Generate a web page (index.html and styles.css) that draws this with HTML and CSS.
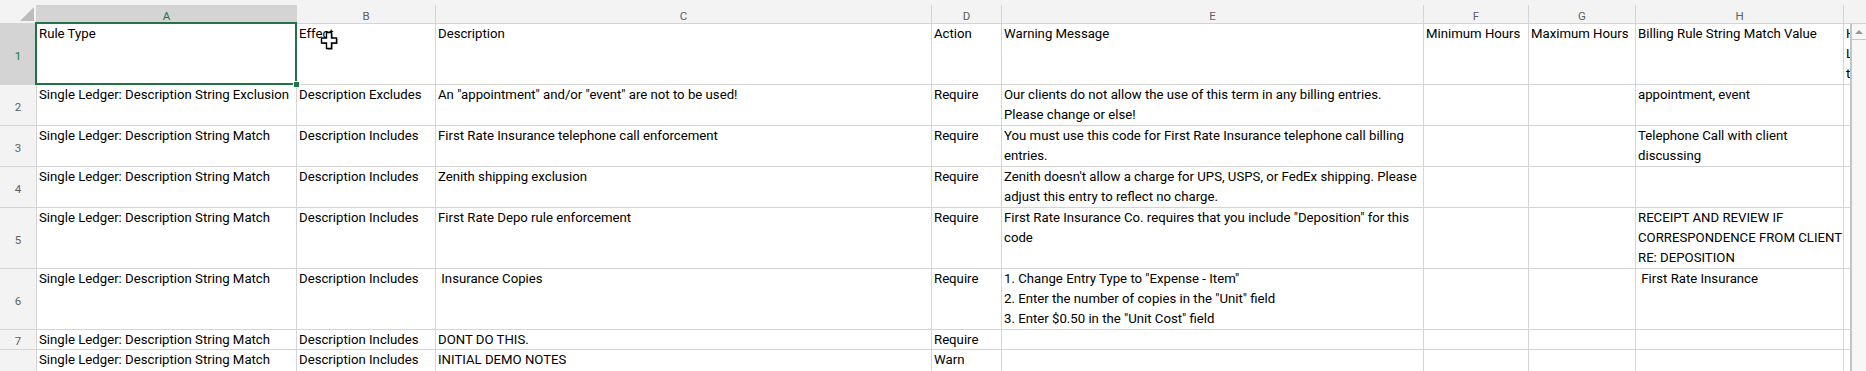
FILE: index.html
```
<!DOCTYPE html>
<html lang="en">
<head>
    <meta charset="UTF-8">
    <meta name="viewport" content="width=device-width, initial-scale=1.0">
    <title>Billing Rules - Sheet1</title>
    <link rel="stylesheet" href="styles.css">
</head>
<body>
    <div class="sheet">
        <div class="grid">
            <!-- column headers -->
            <div class="corner"><span class="corner-tri"></span></div>
            <div class="col-head selected">A</div>
            <div class="col-head">B</div>
            <div class="col-head">C</div>
            <div class="col-head">D</div>
            <div class="col-head">E</div>
            <div class="col-head">F</div>
            <div class="col-head">G</div>
            <div class="col-head">H</div>
            <div class="col-head">I</div>

            <!-- row 1 -->
            <div class="row-head selected">1</div>
            <div class="cell active">Rule Type</div>
            <div class="cell">Effect</div>
            <div class="cell">Description</div>
            <div class="cell">Action</div>
            <div class="cell">Warning Message</div>
            <div class="cell">Minimum Hours</div>
            <div class="cell">Maximum Hours</div>
            <div class="cell">Billing Rule String Match Value</div>
            <div class="cell">Hours<br>Limit<br>type</div>

            <!-- row 2 -->
            <div class="row-head">2</div>
            <div class="cell">Single Ledger: Description String Exclusion</div>
            <div class="cell">Description Excludes</div>
            <div class="cell">An "appointment" and/or "event" are not to be used!</div>
            <div class="cell">Require</div>
            <div class="cell">Our clients do not allow the use of this term in any billing entries.<br>Please change or else!</div>
            <div class="cell"></div>
            <div class="cell"></div>
            <div class="cell">appointment, event</div>
            <div class="cell"></div>

            <!-- row 3 -->
            <div class="row-head">3</div>
            <div class="cell">Single Ledger: Description String Match</div>
            <div class="cell">Description Includes</div>
            <div class="cell">First Rate Insurance telephone call enforcement</div>
            <div class="cell">Require</div>
            <div class="cell">You must use this code for First Rate Insurance telephone call billing<br>entries.</div>
            <div class="cell"></div>
            <div class="cell"></div>
            <div class="cell">Telephone Call with client<br>discussing</div>
            <div class="cell"></div>

            <!-- row 4 -->
            <div class="row-head">4</div>
            <div class="cell">Single Ledger: Description String Match</div>
            <div class="cell">Description Includes</div>
            <div class="cell">Zenith shipping exclusion</div>
            <div class="cell">Require</div>
            <div class="cell">Zenith doesn't allow a charge for UPS, USPS, or FedEx shipping. Please<br>adjust this entry to reflect no charge.</div>
            <div class="cell"></div>
            <div class="cell"></div>
            <div class="cell"></div>
            <div class="cell"></div>

            <!-- row 5 -->
            <div class="row-head">5</div>
            <div class="cell">Single Ledger: Description String Match</div>
            <div class="cell">Description Includes</div>
            <div class="cell">First Rate Depo rule enforcement</div>
            <div class="cell">Require</div>
            <div class="cell">First Rate Insurance Co. requires that you include "Deposition" for this<br>code</div>
            <div class="cell"></div>
            <div class="cell"></div>
            <div class="cell">RECEIPT AND REVIEW IF<br>CORRESPONDENCE FROM CLIENT<br>RE: DEPOSITION</div>
            <div class="cell"></div>

            <!-- row 6 -->
            <div class="row-head">6</div>
            <div class="cell">Single Ledger: Description String Match</div>
            <div class="cell">Description Includes</div>
            <div class="cell">&nbsp;Insurance Copies</div>
            <div class="cell">Require</div>
            <div class="cell">1. Change Entry Type to "Expense - Item"<br>2. Enter the number of copies in the "Unit" field<br>3. Enter $0.50 in the "Unit Cost" field</div>
            <div class="cell"></div>
            <div class="cell"></div>
            <div class="cell">&nbsp;First Rate Insurance</div>
            <div class="cell"></div>

            <!-- row 7 -->
            <div class="row-head">7</div>
            <div class="cell">Single Ledger: Description String Match</div>
            <div class="cell">Description Includes</div>
            <div class="cell">DONT DO THIS.</div>
            <div class="cell">Require</div>
            <div class="cell"></div>
            <div class="cell"></div>
            <div class="cell"></div>
            <div class="cell"></div>
            <div class="cell"></div>

            <!-- row 8 -->
            <div class="row-head">8</div>
            <div class="cell">Single Ledger: Description String Match</div>
            <div class="cell">Description Includes</div>
            <div class="cell">INITIAL DEMO NOTES</div>
            <div class="cell">Warn</div>
            <div class="cell"></div>
            <div class="cell"></div>
            <div class="cell"></div>
            <div class="cell"></div>
            <div class="cell"></div>
        </div>

        <div class="vscroll">
            <div class="vscroll-up"><span class="arrow-up"></span></div>
        </div>

        <!-- mouse pointer over B1 -->
        <svg class="pointer" width="18" height="19" viewBox="0 0 18 19">
            <path d="M6.5 1.5h5v5.5h5v5h-5v5.5h-5v-5.5h-5v-5h5z" fill="#555" transform="translate(1 1)"/>
            <path d="M6.5 1.5h5v5.5h5v5h-5v5.5h-5v-5.5h-5v-5h5z" fill="#fff" stroke="#000" stroke-width="1.4"/>
        </svg>
    </div>
</body>
</html>
```

FILE: styles.css
```
html, body {
    margin: 0;
    padding: 0;
    height: 100%;
    overflow: hidden;
}
body {
    font-family: "Roboto", "Liberation Sans", sans-serif;
    background-color: #f3f3f3;
    color: #000;
}
.sheet {
    position: relative;
    height: 100%;
    padding-top: 5px;
    box-sizing: border-box;
}
.grid {
    display: grid;
    width: max-content;
    grid-template-columns: 36px 259px 138px 495px 69px 421px 104px 106px 207px 100px;
    grid-template-rows: 18px 60px 40px 40px 40px 60px 60px 19px 60px;
    gap: 1px;
    background-color: #d5d5d5;
}
.corner {
    position: relative;
    background-color: #f3f3f3;
}
.corner-tri {
    position: absolute;
    right: 2px;
    bottom: 2px;
    width: 0;
    height: 0;
    border-left: 14px solid transparent;
    border-bottom: 14px solid #bdbdbd;
}
.col-head,
.row-head {
    background-color: #f3f3f3;
    color: #5f5f5f;
    font-size: 11.5px;
    display: flex;
    align-items: center;
    justify-content: center;
    padding-top: 3px;
    box-sizing: border-box;
}
.col-head.selected,
.row-head.selected {
    background-color: #d4d4d4;
    color: #217346;
}
.cell {
    position: relative;
    background-color: #fff;
    font-size: 13.2px;
    line-height: 20px;
    padding: 0 2px;
    white-space: nowrap;
    overflow: hidden;
}
.cell.active {
    overflow: visible;
    z-index: 2;
}
.cell.active::after {
    content: "";
    position: absolute;
    top: -2px;
    left: -2px;
    right: -1px;
    bottom: -1px;
    border: 2px solid #217346;
}
.cell.active::before {
    content: "";
    position: absolute;
    right: -4px;
    bottom: -4px;
    width: 5px;
    height: 5px;
    background-color: #217346;
    border: 1px solid #fff;
    z-index: 1;
}
.vscroll {
    position: absolute;
    top: 23px;
    right: 0;
    bottom: 0;
    width: 14px;
    background-color: #f7f7f7;
    border-left: 2px solid #c4c4c4;
    border-top: 1px solid #d5d5d5;
}
.vscroll-up {
    height: 15px;
    border-bottom: 1px solid #c9c9c9;
    display: flex;
    align-items: center;
    justify-content: center;
}
.arrow-up {
    width: 0;
    height: 0;
    border-left: 4px solid transparent;
    border-right: 4px solid transparent;
    border-bottom: 4px solid #9a9a9a;
}
.pointer {
    position: absolute;
    left: 320px;
    top: 31px;
    z-index: 5;
}
```
